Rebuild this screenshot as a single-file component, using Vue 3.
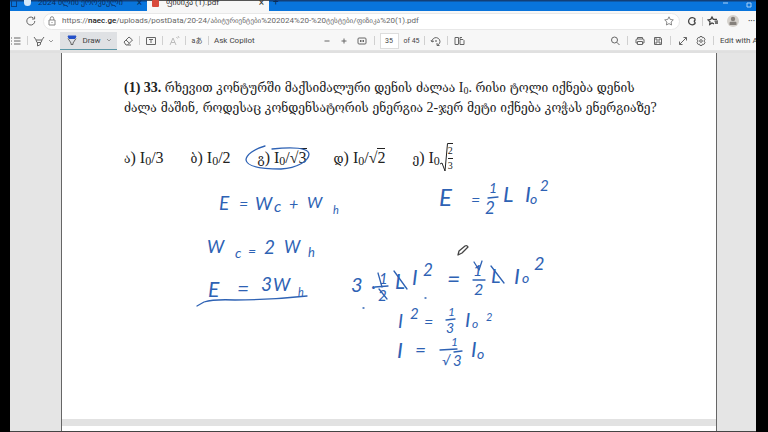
<script setup>
const inkText = [
  ['E', 219, 210, 19], ['=', 239, 210, 16], ['W', 255, 210, 18], ['c', 274, 212, 16], ['+', 289, 210, 16], ['W', 307, 208, 16], ['h', 333, 214, 11],
  ['W', 207, 253, 18], ['c', 235, 258, 14], ['=', 248, 256, 14], ['2', 264, 254, 19], ['W', 284, 253, 17], ['h', 308, 257, 13],
  ['E', 208, 297, 21], ['=', 237, 296, 21], ['3', 261, 291, 19], ['W', 273, 291, 18], ['h', 298, 296, 11],
  ['E', 439, 206, 24], ['=', 471, 206, 16], ['1', 489, 193, 14], ['2', 485, 214, 17], ['L', 503, 202, 22], ['I', 525, 202, 22], ['o', 530, 204, 14], ['2', 540, 191, 15],
  ['3', 351, 292, 20], ['·', 371, 293, 19], ['1', 379, 284, 15], ['2', 378, 301, 15], ['L', 395, 289, 21], ['I', 412, 285, 21], ['2', 423, 276, 17], ['=', 447, 287, 23],
  ['1', 473, 276, 16], ['2', 474, 295, 16], ['L', 491, 283, 20], ['I', 514, 284, 22], ['o', 522, 283, 14], ['2', 534, 270, 18],
  ['I', 398, 328, 19], ['2', 410, 319, 15], ['=', 424, 328, 16], ['1', 448, 316, 12], ['3', 446, 333, 14], ['I', 465, 327, 20], ['o', 472, 328, 12], ['2', 486, 321, 11],
  ['I', 397, 358, 22], ['=', 415, 357, 19], ['1', 451, 346, 12], ['√', 442, 365, 13], ['3', 453, 366, 15], ['I', 471, 357, 21], ['o', 477, 359, 14]
]
const inkStrokes = [
  'M265 146 C254 149 246 155 246 160 C247 167 262 169 281 169 C297 168 309 161 309 154 C308 147 292 147 272 149',
  'M197 306 L204 302 Q214 299 235 300 Q270 300 307 296',
  'M488 198 L498 197',
  'M375 287 L388 286', 'M378 273 L382 287', 'M379 289 L387 299', 'M394 271 L407 289',
  'M473 280 L485 280', 'M474 262 L479 270 L482 261', 'M491 266 L504 283',
  'M446 320 L455 319', 'M440 350 L457 349', 'M454 352 L462 351',
  'M363 308 h1', 'M425 298 h1'
]
</script>

<template>
  <div class="screen">
    <div class="browser">
      <header class="tabs">
        <a class="tab" href="#first">
          <i class="fav-left"></i><i class="favicon"></i>
          <span class="tab-title">2024 წლის ეროვნული</span><span class="close">×</span>
        </a>
        <a class="tab active" href="#second">
          <i class="favicon red"></i><span class="tab-title">ფიზიკა (1).pdf</span><span class="close">×</span>
        </a>
        <button class="new" aria-label="New tab">+</button>
        <div class="window-controls">
          <svg viewBox="0 0 30 8"><path d="M1 1h5M25 1h4v4h-4z" /></svg>
        </div>
      </header>

      <nav class="address">
        <button class="icon" aria-label="Reload">
          <svg viewBox="0 0 12 12"><path d="M9.8 6A4 4 0 1 1 8.4 3M9.6 1.5V4H7" /></svg>
        </button>
        <div class="url">
          <svg class="lock" viewBox="0 0 12 12"><path d="M3 5h6v5H3zM4.3 5V3.400a1.700 1.700 0 0 1 3.400 0V5M6 7v1" /></svg>
          <a class="url-text" href="#url">https://<b>naec.ge</b>/uploads/postData/20-24/<span class="geo">აბიტურიენტები</span>%202024%20-%20<span class="geo">ტესტები</span>/<span class="geo">ფიზიკა</span>%20(1).pdf</a>
          <button class="icon" aria-label="Favourite">
            <svg class="soft" viewBox="0 0 12 12"><path d="M6 1.800l1.300 2.700 3 .4-2.200 2.100.5 3L6 8.600 3.400 10l.5-3-2.200-2.100 3-.4z" /></svg>
          </button>
        </div>
        <div class="browser-actions">
          <button class="icon" aria-label="Extensions">
            <svg viewBox="0 0 12 12"><path class="bold" d="M9 4A3.600 3.600 0 1 0 9 8.500V7.400a1.200 1.200 0 0 1 0-2.200z" /></svg>
          </button>
          <i class="sep"></i>
          <button class="icon" aria-label="Favourites">
            <svg viewBox="0 0 12 12"><path class="bold" d="M7 8.800L5 8 2.700 9.500l.3-2.800-2-1.800 2.700-.5L5 2l1.300 2.400H10M7.500 6.200H11M8 8h3" /></svg>
          </button>
          <button class="avatar" aria-label="Profile">
            <svg viewBox="0 0 12 12"><circle cx="6" cy="4" r="2.200" /><path d="M2.500 10V8q0-1.200 1.200-1.200h4.600q1.200 0 1.200 1.200v2z" /></svg>
          </button>
          <button class="more" aria-label="More">···</button>
        </div>
      </nav>

      <div class="toolbar">
        <div class="group">
          <button class="icon" aria-label="Contents">
            <svg viewBox="0 0 12 12"><path d="M1 3h1M1 6h1M1 9h1M4 3h6.500M4 6h6.500M4 9h6.500" /></svg>
          </button>
          <i class="sep"></i>
          <span class="split">
            <button class="icon" aria-label="Highlight">
              <svg viewBox="0 0 12 12"><path d="M1 2l2.200 3h5.600L11 2M3 5l1 2.500h4L9 5M4.500 7.500V11l3-1.500v-2" /></svg>
            </button>
            <svg class="chevron" viewBox="0 0 8 8"><path d="M2 3l2 2 2-2" /></svg>
          </span>
          <button class="draw">
            <svg class="nib" viewBox="0 0 12 12"><path class="nib-fill" d="M2 2h8L9 4.500H3z" /><path d="M2 4.500L5 9v1.500h2V9l3-4.500" /></svg>
            <span>Draw</span>
            <svg class="chevron" viewBox="0 0 8 8"><path d="M2 3l2 2 2-2" /></svg>
          </button>
          <button class="icon" aria-label="Erase">
            <svg viewBox="0 0 12 12"><path d="M2 7l5-5 3.500 3L5.500 10H4zM4 5l3.500 3.300M5.500 10H9" /></svg>
          </button>
          <i class="sep"></i>
          <button class="icon" aria-label="Add text">
            <svg viewBox="0 0 12 12"><path d="M1.500 2.500h9v7h-9zM4 4.500h4M6 4.500V8" /></svg>
          </button>
          <i class="sep"></i>
          <button class="icon faint" aria-label="Read aloud">
            <svg viewBox="0 0 12 12"><path d="M2 10l3-7 3 7M3 7.500h4M8.500 2l1 1.500M10 1l1.200 2" /></svg>
          </button>
          <i class="sep"></i>
          <button class="icon translate" aria-label="Translate">aあ</button>
          <i class="sep"></i>
          <button class="text-button">Ask Copilot</button>
        </div>

        <div class="group middle">
          <button class="icon" aria-label="Zoom out"><svg viewBox="0 0 12 12"><path d="M3.500 6h5" /></svg></button>
          <button class="icon" aria-label="Zoom in"><svg viewBox="0 0 12 12"><path d="M3.500 6h5M6 3.500v5" /></svg></button>
          <button class="icon wide" aria-label="Fit to width">
            <svg viewBox="0 0 14 12"><path d="M4 3h6q1 0 1 1v4q0 1-1 1H4Q3 9 3 8V4q0-1 1-1zM5 6h4M6 5L5 6l1 1M8 5l1 1-1 1" /></svg>
          </button>
          <i class="sep"></i>
          <label class="pager"><input value="35" aria-label="Page number" /><span>of 45</span></label>
          <i class="sep"></i>
          <button class="icon" aria-label="Rotate">
            <svg viewBox="0 0 12 12"><path d="M2 7a4 4 0 1 1 7.500 1.500L7 10.500M1 5l1 2 2-1M7 8v2.500h2.500" /><circle cx="6" cy="6" r=".5" /></svg>
          </button>
          <i class="sep"></i>
          <button class="icon" aria-label="Page view">
            <svg viewBox="0 0 12 12"><path d="M5 9.500H2v-7h3.500v7M7 4V2.500h2M7 4.500h3l1 1v4H7z" /></svg>
          </button>
        </div>

        <div class="group right">
          <button class="icon" aria-label="Search"><svg viewBox="0 0 12 12"><circle cx="5.500" cy="5" r="3" /><path d="M7.700 7.200L10.500 10" /></svg></button>
          <i class="sep"></i>
          <button class="icon" aria-label="Print">
            <svg viewBox="0 0 12 12"><path d="M3.500 4V2.500h5V4M3.500 8H2V5q0-1 1-1h6q1 0 1 1v3H8.500M3.500 6.500h5v3h-5z" /></svg>
          </button>
          <button class="icon" aria-label="Save">
            <svg viewBox="0 0 12 12"><path d="M2.500 2.500h6l1 1v6h-7zM4 2.500v2.500h4V2.500M4 9.500V7h4v2.500" /></svg>
          </button>
          <i class="sep"></i>
          <button class="icon" aria-label="Full screen">
            <svg viewBox="0 0 12 12"><path d="M2.500 9.500l7-7M6.500 2.500h3v3M2.500 6.500v3h3" /></svg>
          </button>
          <button class="icon" aria-label="Settings">
            <svg viewBox="0 0 12 12"><path d="M5 1.500h2l.4 1.300 1.400-.3 1.200 1.800L9 6l1 1.700-1.200 1.800-1.400-.3L7 10.500H5l-.4-1.300-1.400.3L2 7.700 3 6 2 4.300l1.200-1.800 1.400.3z" /><circle cx="6" cy="6" r="1.300" /></svg>
          </button>
          <i class="sep"></i>
          <button class="text-button edit">Edit with Acrobat</button>
        </div>
      </div>

      <main class="viewer">
        <article class="page">
          <p class="question"><b>(1) 33.</b> <span class="ge">რხევით კონტურში მაქსიმალური დენის ძალაა</span> I<sub>0</sub>. <span class="ge">რისი ტოლი იქნება დენის</span><br /><span class="ge">ძალა მაშინ, როდესაც კონდენსატორის ენერგია</span> 2-<span class="ge">ჯერ მეტი იქნება კოჭას ენერგიაზე</span>?</p>
          <ul class="answers">
            <li><span class="ge">ა</span>) I<sub>0</sub>/3</li>
            <li><span class="ge">ბ</span>) I<sub>0</sub>/2</li>
            <li><span class="ge">გ</span>) I<sub>0</sub>/√<span class="root">3</span></li>
            <li><span class="ge">დ</span>) I<sub>0</sub>/√<span class="root">2</span></li>
            <li class="tall">
              <span><span class="ge">ე</span>) I<sub>0</sub></span>
              <svg class="radical" viewBox="0 0 8 30"><path d="M0 21l2-1 3 8L7.500 .5H8" /></svg>
              <span class="fraction"><span>2</span><span>3</span></span>
            </li>
          </ul>
          <svg class="ink" viewBox="62 53 655 366" width="655" height="366">
            <text v-for="(m, i) in inkText" :key="i" :x="m[1]" :y="m[2]" :font-size="m[3]">{{ m[0] }}</text>
            <path v-for="(d, i) in inkStrokes" :key="'s' + i" :d="d" />
            <g class="pen"><path d="M458 255l1-4 6-5q2-1 3 1l-6 6z" /></g>
          </svg>
        </article>
        <div class="page-gap"></div>
        <div class="next-page"></div>
      </main>
    </div>
  </div>
</template>

<style>
body { margin: 0; background: #000; }
</style>

<style scoped>
* { box-sizing: border-box; }
.screen { height: 100vh; padding: 0 12px 0 10px; background: #000; font-family: Roboto, "Noto Sans", "DejaVu Sans", sans-serif; font-size: 8px; color: #444; }
.browser { height: 100%; display: flex; flex-direction: column; overflow: hidden; background: #f7f7f7; border-bottom: 1px solid #444; }
button { border: 0; padding: 0; background: none; font: inherit; color: inherit; flex: none; }
a { color: inherit; text-decoration: none; }
svg { display: block; fill: none; stroke: #666; stroke-width: 1; }
.bold { stroke-width: 1.3; stroke: #444; }
.soft { stroke: #888; }

.tabs { height: 11px; flex: none; display: flex; align-items: flex-end; overflow: hidden; background: linear-gradient(#123f78 0 1px, #0874dc 2px); color: #0a2d5c; }
.tab { width: 137px; height: 11px; display: flex; align-items: center; gap: 7px; padding: 0 5px 6px 1px; white-space: nowrap; line-height: 12px; }
.tab-title { flex: 1; overflow: hidden; }
.tab.active { width: 122px; padding-left: 5px; background: #f7f7f7; color: #333; border-top: 1px solid #555; }
.fav-left { width: 6px; height: 8px; border: 1px solid #0a3f80; border-top: 0; }
.favicon { width: 7px; height: 7px; border-radius: 0 0 4px 4px; background: #d5e8fa; flex: none; }
.favicon.red { border-radius: 1px; background: #d94b3c; }
.close { font-size: 10px; }
.new { padding: 0 4px 4px; line-height: 10px; font-size: 10px; }
.window-controls { margin-left: auto; padding-right: 4px; }
.window-controls svg { width: 30px; height: 10px; stroke: #a8d0f7; }

.icon { width: 12px; height: 12px; display: block; }
.icon svg { width: 100%; height: 12px; }
.sep { width: 1px; height: 9px; flex: none; background: #d0d0d0; }
.address { height: 20px; flex: none; display: flex; align-items: center; gap: 6px; padding-left: 15px; }
.url { flex: 1; height: 17px; display: flex; align-items: center; gap: 4px; padding: 0 4px 0 2px; background: #fff; border: 1px solid #e8e8e8; border-radius: 9px; }
.lock { width: 12px; height: 12px; flex: none; stroke: #888; }
.url-text { flex: 1; min-width: 0; white-space: nowrap; overflow: hidden; line-height: 14px; color: #666; }
.url-text b { color: #222; font-weight: 500; }
.geo { font-family: "DejaVu Sans", sans-serif; font-size: 7px; }
.browser-actions { display: flex; align-items: center; gap: 4px; }
.avatar { width: 12px; height: 12px; border-radius: 50%; background: #d5d1cc; margin: 0 4px; }
.avatar svg { fill: #85807b; stroke: none; }
.more { width: 9px; overflow: hidden; font-weight: 700; line-height: 12px; }

.toolbar { height: 20px; flex: none; display: grid; grid-template-columns: 1fr auto 1fr; align-items: center; border-bottom: 1px solid #e3e3e3; white-space: nowrap; }
.group { display: flex; align-items: center; gap: 5px; min-width: 0; }
.middle { padding-left: 19px; }
.right { justify-content: flex-end; gap: 6px; }
.split { display: flex; align-items: center; gap: 2px; }
.chevron { width: 8px; height: 8px; stroke: #999; }
.draw { width: 57px; height: 18px; display: flex; align-items: center; justify-content: space-between; padding: 0 4px 0 6px; background: #dfe1e4; border-bottom: 1px solid #5c97a8; }
.nib { width: 12px; height: 12px; }
.nib-fill { fill: #2450c8; stroke: #2450c8; }
.faint { opacity: .4; }
.translate { font-family: Roboto, "Noto Sans CJK JP", sans-serif; font-size: 7px; line-height: 12px; }
.text-button { line-height: 12px; }
.edit { width: 36px; overflow: hidden; text-align: left; }
.wide { width: 14px; }
.pager { display: flex; align-items: center; gap: 5px; font-size: 7px; line-height: 12px; }
.pager span { width: 15px; }
.pager input { width: 19px; height: 16px; padding: 0; border: 1px solid #ddd; background: #fff; color: #444; font: inherit; text-align: center; }

.viewer { flex: 1; min-height: 0; display: flex; flex-direction: column; padding: 0 39px 0 51px; border-top: 2px solid #e0e0e0; background: #e5e5e5; }
.page, .page-gap, .next-page { border: solid #666; border-width: 0 1px; }
.page { flex: 1; position: relative; overflow: hidden; padding: 25px 56px 0 62px; background: #fff; color: #222; font-family: "Liberation Serif", "DejaVu Serif", serif; font-size: 14px; }
.page-gap { height: 7px; background: #e2e2e2; }
.next-page { height: 5px; background: #fff; }
.question { margin: 0; line-height: 20px; white-space: nowrap; }
.ge { font-family: "DejaVu Serif", "DejaVu Sans", serif; font-size: 12px; line-height: 12px; }
sub { font-size: 10px; line-height: 0; vertical-align: -2px; }
.answers { margin: 20px 0 0; padding: 0; height: 40px; list-style: none; display: flex; align-items: center; gap: 27px; font-size: 16px; line-height: 20px; white-space: nowrap; }
.answers sub { font-size: 12px; }
.root { border-top: 1px solid #222; }
.tall { display: flex; align-items: center; }
.radical { width: 8px; height: 30px; stroke: #222; }
.fraction { display: grid; border-top: 1px solid #222; font-size: 10px; line-height: 14px; text-align: center; }
.fraction span + span { border-top: 1px solid #222; }
.ink { position: absolute; top: 0; left: 0; stroke: #2e62b4; stroke-width: 1.3; stroke-linecap: round; stroke-linejoin: round; pointer-events: none; }
.ink text { font-family: Lato, "Open Sans", sans-serif; font-style: italic; font-weight: 400; fill: #2e62b4; stroke: none; }
.pen { stroke: #444; }
</style>
